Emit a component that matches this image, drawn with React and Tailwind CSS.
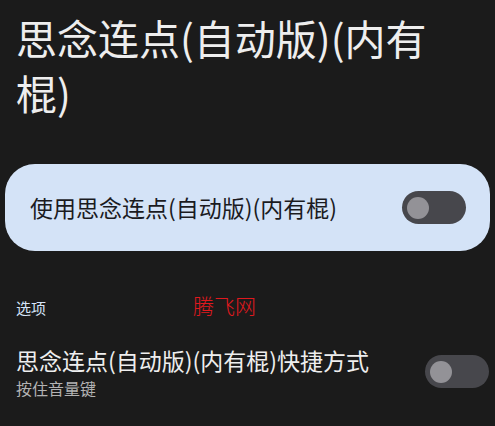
import React, { useState } from 'react';

function Toggle({ on, onChange, className = '' }) {
    return (
        <button
            type="button"
            onClick={onChange}
            className={`flex items-center w-[64px] h-[33px] rounded-full bg-[#47474c] px-[5px] shrink-0 ${className}`}
        >
            <span className={`block w-[22px] h-[22px] rounded-full bg-[#939297] ${on ? 'ml-auto' : ''}`} />
        </button>
    );
}

export default function App() {
    const [main, setMain] = useState(false);
    const [shortcut, setShortcut] = useState(false);

    return (
        <div
            className="w-[495px] h-[426px] overflow-hidden bg-[#1b1b1b] text-[#eeeeee]"
            style={{ fontFamily: '"Noto Sans CJK SC", Roboto, sans-serif' }}
        >
            <h1 className="px-4 pt-[10px] text-[41px] leading-[55px] font-normal">
                思念连点(自动版)(内有棍)
            </h1>

            <div className="mx-[5px] mt-[44px] h-[87px] rounded-[30px] bg-[#d4e3f7] flex items-center justify-between pl-[25px] pr-[24px]">
                <span className="text-[23px] text-[#1b1b1f]">使用思念连点(自动版)(内有棍)</span>
                <Toggle on={main} onChange={() => setMain(!main)} />
            </div>

            <div className="relative mt-[44px] px-4">
                <span className="text-[15px] text-[#d6e4f9]">选项</span>
                <span
                    className="absolute left-[193px] top-[-5px] text-[21px] text-[#e0191e]"
                    style={{ fontFamily: '"Noto Sans CJK SC", sans-serif', fontWeight: 300 }}
                >
                    腾飞网
                </span>
            </div>

            <div className="flex items-center justify-between pl-4 pr-[6px] mt-[26px]">
                <div className="flex flex-col">
                    <span className="text-[23px] leading-[28px]">思念连点(自动版)(内有棍)快捷方式</span>
                    <span className="text-[16px] leading-[20px] mt-[4px] text-[#b3b3b3]">按住音量键</span>
                </div>
                <Toggle on={shortcut} onChange={() => setShortcut(!shortcut)} />
            </div>
        </div>
    );
}
